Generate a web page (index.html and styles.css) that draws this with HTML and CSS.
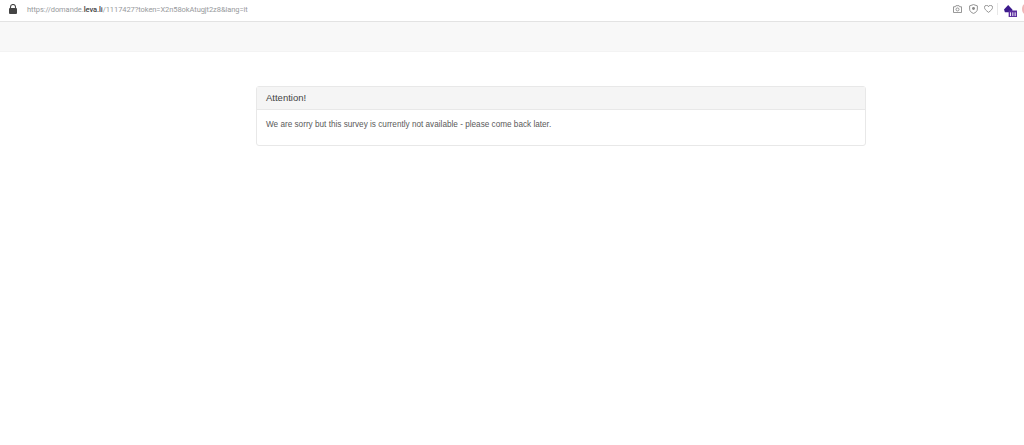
FILE: index.html
```html
<!DOCTYPE html>
<html lang="en">
<head>
<meta charset="utf-8">
<title>Attention!</title>
<link rel="stylesheet" href="styles.css">
</head>
<body>
<header class="browser-bar">
  <svg class="lock" width="8" height="10" viewBox="0 0 8 10"><path d="M1.500 4V3a2.500 2.500 0 0 1 5 0v1" fill="none" stroke="#444" stroke-width="1.100"/><rect y="4" width="8" height="6" rx="1" fill="#444"/></svg>
  <div class="url">https://domande.<b>leva.li</b>/1117427?token=X2n58okAtugjt2z8&amp;lang=it</div>
  <div class="tools">
    <svg width="9" height="8" viewBox="0 0 10 9"><path d="M.5 2h2L3.200.8h3.600L7.500 2h2v6.500h-9z" fill="none" stroke="#888"/><circle cx="5" cy="5" r="1.700" fill="none" stroke="#888"/></svg>
    <svg class="shield" width="9" height="10" viewBox="0 0 10 11"><path d="M5 .6 9.300 2v3.600c0 2.300-1.800 3.900-4.300 4.800C2.500 9.500.7 7.900.7 5.600V2z" fill="none" stroke="#888"/><circle cx="5" cy="5" r="1.600" fill="#888"/></svg>
    <svg width="9" height="8" viewBox="0 0 10 9"><path d="M5 8.300C2 6 .5 4.500.5 2.900A2.300 2.300 0 0 1 5 2a2.300 2.300 0 0 1 4.500.9C9.500 4.500 8 6 5 8.300z" fill="none" stroke="#888"/></svg>
    <span class="sep"></span>
    <svg class="ext" width="13" height="13" viewBox="0 0 14 14"><path d="M0 6 4.500 1 9 6v3H1z" fill="#3c1a8c"/><rect x="5" y="7" width="9" height="7" fill="#5b2d9e"/><path d="M7 9v4M9.500 9v4M12 9v4" stroke="#fff"/></svg>
    <span class="badge"></span>
  </div>
</header>
<div class="nav-strip"></div>
<main class="content">
  <section class="panel">
    <h1 class="panel-heading">Attention!</h1>
    <p class="panel-body">We are sorry but this survey is currently not available - please come back later.</p>
  </section>
</main>
</body>
</html>
```

FILE: styles.css
```css
* { box-sizing: border-box; }
html, body { margin: 0; height: 100%; overflow: hidden; background: #fff; }
body { font-family: "Liberation Sans", Arial, sans-serif; color: #555; }
.browser-bar {
  height: 22px;
  display: flex;
  align-items: center;
  padding: 0 0 3px 9px;
  background: #fff;
  border-bottom: 1px solid #e3e3e3;
}
.lock { flex: none; }
.url { margin-left: 10px; font: 7.5px "Roboto", sans-serif; letter-spacing: -.07px; color: #979a9d; }
.url b { color: #444; font-weight: 500; }
.tools { margin-left: auto; display: flex; align-items: center; gap: 6px; width: 71px; flex: none; overflow: hidden; }
.tools svg { flex: none; }
.shield { margin-left: 1px; }
.sep { width: 1px; height: 12px; background: #e8e8e8; margin-left: -2px; flex: none; }
.ext { margin-top: 2px; }
.badge { width: 6px; height: 10px; border-radius: 50%; background: #f0b8b8; flex: none; margin-left: -1px; }
.nav-strip { height: 30px; background: #f8f8f8; border-bottom: 1px solid #f3f3f3; }
.content { padding: 34px 158px 0 256px; }
.panel { height: 60px; border: 1px solid #e8e8e8; border-radius: 3px; background: #fff; }
.panel-heading {
  margin: 0;
  height: 23px;
  padding: 4px 9px 0;
  font-size: 9.500px;
  line-height: 13px;
  font-weight: 400;
  color: #444;
  background: #f5f5f5;
  border-bottom: 1px solid #e8e8e8;
}
.panel-body { margin: 0; padding: 9px 9px 0; font-size: 8.200px; line-height: 12px; color: #5a5a5a; }
```
